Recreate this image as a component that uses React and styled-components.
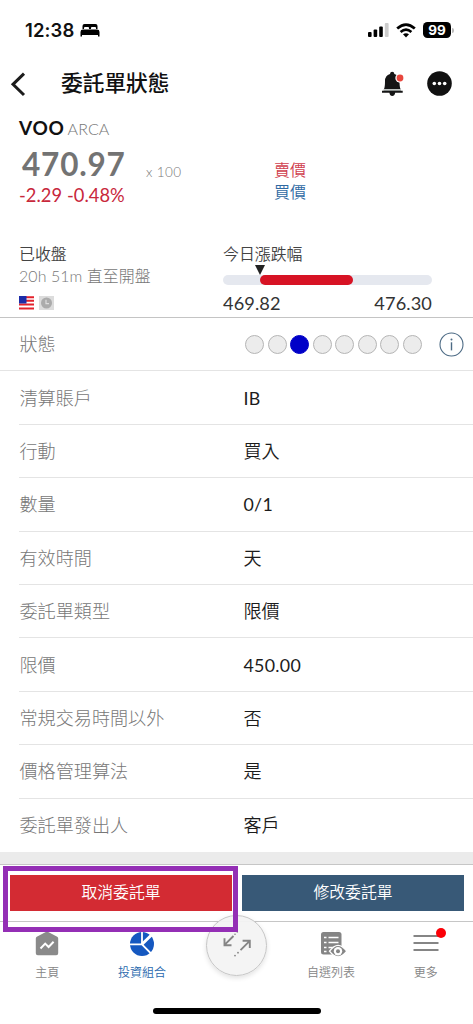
import React from "react";
import styled, { createGlobalStyle } from "styled-components";

const GlobalStyle = createGlobalStyle`
  * {
    box-sizing: border-box;
  }
  body {
    margin: 0;
    background: #fff;
    font-family: Lato, "Noto Sans CJK TC", sans-serif;
    color: #222;
  }
`;

const Screen = styled.div`
  position: relative;
  width: 473px;
  height: 1024px;
  overflow: hidden;
  display: flex;
  flex-direction: column;
  background: #fff;
`;

const StatusBar = styled.div`
  height: 60px;
  flex: none;
  display: flex;
  align-items: center;
  justify-content: space-between;
  padding: 0 19px 0 25px;
`;

const StatusGroup = styled.div`
  display: flex;
  align-items: center;
  gap: ${(props) => props.$gap}px;
`;

const Clock = styled.span`
  font-family: Inter, sans-serif;
  font-size: 18.5px;
  font-weight: 600;
  letter-spacing: 0.1px;
  color: #111;
`;

const Battery = styled.div`
  width: 28px;
  height: 15.5px;
  border-radius: 4.5px;
  background: #000;
  color: #fff;
  font-family: Inter, sans-serif;
  font-size: 13.5px;
  font-weight: 700;
  display: flex;
  align-items: center;
  justify-content: center;
`;

const BatteryTip = styled.div`
  width: 2px;
  height: 5px;
  margin-left: -6px;
  border-radius: 0 2px 2px 0;
  background: #bbb;
`;

const NavBar = styled.div`
  height: 47px;
  flex: none;
  display: flex;
  align-items: center;
  padding: 0 21px 0 9px;
`;

const Title = styled.h1`
  flex: 1;
  margin: 0 0 2px 34px;
  font-size: 21.7px;
  line-height: 30px;
  font-weight: 500;
  color: #111;
`;

const NavIcons = styled.div`
  display: flex;
  align-items: center;
  gap: 22px;
`;

const Quote = styled.section`
  height: 211px;
  flex: none;
  display: flex;
  flex-direction: column;
  padding: 9px 41px 0 19px;
  border-bottom: 1px solid #c4c4c4;
`;

const Symbol = styled.div`
  display: flex;
  align-items: baseline;
  gap: 3px;
  height: 24px;
  line-height: 24px;
`;

const Ticker = styled.span`
  font-size: 19px;
  font-weight: 700;
  letter-spacing: 0.7px;
  color: #111;
`;

const Exchange = styled.span`
  font-size: 16px;
  font-weight: 300;
  letter-spacing: 0.1px;
  color: #777;
`;

const PriceRow = styled.div`
  display: flex;
  height: 102px;
`;

const PriceColumn = styled.div`
  width: 127px;
`;

const Price = styled.div`
  padding: 6px 0 0 3px;
  font-size: 31.5px;
  line-height: 36px;
  font-weight: 700;
  letter-spacing: 0.8px;
  color: #737373;
`;

const Change = styled.div`
  margin-top: 1px;
  font-size: 18.3px;
  line-height: 24px;
  letter-spacing: 0.05px;
  white-space: nowrap;
  color: #c8283c;
`;

const Size = styled.div`
  width: 128px;
  padding-top: 22px;
  font-size: 13.5px;
  line-height: 20px;
  font-weight: 300;
  letter-spacing: 0.4px;
  color: #777;
`;

const BidAsk = styled.div`
  padding-top: 19px;
  font-size: 16px;
  line-height: 22px;
  font-weight: 350;
`;

const Ask = styled.div`
  color: #d0404e;
`;

const Bid = styled.div`
  color: #2f6aa3;
`;

const Market = styled.div`
  display: flex;
  justify-content: space-between;
`;

const Session = styled.div`
  font-size: 15.9px;
  line-height: 22px;
  font-weight: 350;
  padding-top: 1px;
  color: #444;
`;

const Countdown = styled.div`
  font-weight: 300;
  letter-spacing: 0.1px;
  color: #777;
`;

const Badges = styled.div`
  display: flex;
  gap: 5px;
  margin-top: 9px;
`;

const DayRange = styled.div`
  width: 209px;
  font-size: 15.9px;
  line-height: 22px;
  font-weight: 350;
  padding-top: 1px;
  color: #444;
`;

const Marker = styled.div`
  width: 0;
  height: 0;
  margin: 0 0 0 32px;
  border: 5px solid transparent;
  border-top: 10px solid #222;
  border-bottom: 0;
`;

const RangeTrack = styled.div`
  height: 10px;
  border-radius: 5px;
  padding: 0 79px 0 37px;
  background: #e5e8ef;
`;

const RangeFill = styled.div`
  height: 10px;
  border-radius: 5px;
  background: #d71324;
`;

const RangeLabels = styled.div`
  display: flex;
  justify-content: space-between;
  margin-top: 6px;
  font-size: 18.2px;
  line-height: 24px;
  font-weight: 400;
  letter-spacing: 0.1px;
  color: #333;
`;

const Details = styled.section`
  flex: none;
`;

const Row = styled.div`
  height: 53.4px;
  display: flex;
  align-items: center;
  margin-left: ${(props) => (props.$full ? 0 : 19)}px;
  padding-left: ${(props) => (props.$full ? 19.5 : 0.5)}px;
  border-bottom: 1px solid #e4e4e4;

  &:last-child {
    border-bottom: 0;
  }
`;

const Label = styled.div`
  width: 224px;
  flex: none;
  font-size: 18.1px;
  line-height: 26px;
  font-weight: 300;
  color: #777;
`;

const Value = styled.div`
  font-size: ${(props) => (props.$latin ? 17.8 : 18.1)}px;
  line-height: 26px;
  font-weight: ${(props) => (props.$latin ? 400 : 350)};
  letter-spacing: ${(props) => (props.$latin ? 0.3 : 0)}px;
  color: #1c1c1c;
`;

const Steps = styled.div`
  display: flex;
  gap: 3.5px;
  margin-left: 1.5px;
`;

const Step = styled.div`
  width: 19px;
  height: 19px;
  border-radius: 50%;
  border: 1px solid ${(props) => (props.$active ? "#0000c8" : "#b5b5b5")};
  background: ${(props) => (props.$active ? "#0000c8" : "#ececec")};
`;

const Info = styled.div`
  margin-left: 17px;
  display: flex;
`;

const Divider = styled.div`
  height: 13px;
  flex: none;
  background: #ebebeb;
  border-bottom: 1px solid #c6c6c6;
`;

const Actions = styled.div`
  height: 57px;
  flex: none;
  display: flex;
  gap: 10px;
  padding: 10px 9px 10px 10px;
  border-bottom: 1px solid #c6c6c6;
`;

const ActionButton = styled.button`
  flex: 1;
  border: 0;
  padding: 0 0 2px;
  font: inherit;
  font-size: 15.8px;
  font-weight: 350;
  color: #fff;
  background: ${(props) => (props.$danger ? "#d32b33" : "#385977")};
`;

const Highlight = styled.div`
  position: absolute;
  left: 3px;
  top: 866px;
  width: 235px;
  height: 66px;
  border: 5px solid #942fb5;
`;

const TabBar = styled.nav`
  flex: 1;
  display: grid;
  grid-template-columns: repeat(5, 1fr);
`;

const Tab = styled.div`
  display: flex;
  flex-direction: column;
  align-items: center;
  gap: 5px;
  padding-top: 8px;
  font-size: 12px;
  line-height: 20px;
  font-weight: 350;
  color: ${(props) => (props.$active ? "#2868ad" : "#858585")};
`;

const Swap = styled.div`
  position: absolute;
  left: 206px;
  top: 914.5px;
  width: 61px;
  height: 61px;
  display: flex;
  align-items: center;
  justify-content: center;
  border: 1px solid #c6c6c6;
  border-radius: 50%;
  background: rgba(243, 243, 243, 0.95);
  box-shadow: 0 2px 5px rgba(0, 0, 0, 0.12);
`;

const HomeIndicator = styled.div`
  position: absolute;
  left: 153px;
  top: 1008px;
  width: 168px;
  height: 6px;
  border-radius: 3px;
  background: #000;
`;

const BedIcon = () => (
  <svg width="20" height="15" viewBox="0 0 20 15">
    <path
      d="M2.5 6V3Q2.5 1 4.5 1H15.5Q17.5 1 17.5 3V6H16V4.8Q16 4 15 4H12Q11 4 11 4.8V6H9V4.8Q9 4 8 4H5Q4 4 4 4.8V6ZM0.5 13.5V9Q0.5 6.6 3 6.6H17Q19.5 6.6 19.5 9V13.5H18V12H2V13.5Z"
      fill="#000"
    />
  </svg>
);

const SignalIcon = () => (
  <svg width="21" height="14" viewBox="0 0 21 14">
    <rect x="0" y="9" width="3.6" height="5" rx="1" />
    <rect x="5.6" y="6.6" width="3.6" height="7.4" rx="1" />
    <rect x="11.2" y="3.6" width="3.6" height="10.4" rx="1" />
    <rect x="16.8" y="0" width="3.8" height="14" rx="1" fill="#ccc" />
  </svg>
);

const WifiIcon = () => (
  <svg width="20" height="15" viewBox="0 0 20 15" fill="none" stroke="#000">
    <path d="M1.2 5.6Q10-2.4 18.8 5.6" strokeWidth="2.7" />
    <path d="M4.6 9Q10 4.2 15.4 9" strokeWidth="2.6" />
    <path d="M7 11.3Q10 9 13 11.3L10 14.4Z" fill="#000" stroke="none" />
  </svg>
);

const BackIcon = () => (
  <svg width="18" height="26" viewBox="0 0 18 26">
    <path
      d="M15 2.6L4 13.3L15 24"
      fill="none"
      stroke="#1c1c1c"
      strokeWidth="3"
    />
  </svg>
);

const BellIcon = () => (
  <svg width="24" height="26" viewBox="0 0 24 26">
    <path
      d="M3 18Q4 16 4 10Q4 4.5 9 3Q9.2 0.8 11.2 0.8Q13.2 0.8 13.4 3Q18.5 4.5 18.5 10Q18.5 16 19.5 18Z"
      fill="#151515"
    />
    <path d="M2.5 18.2H20V20H2.5Z" fill="#aeb4b2" />
    <path
      d="M1 19.8H21.7V21.8H14.2Q13.5 25 11.2 25Q9 25 8.4 21.8H1Z"
      fill="#151515"
    />
    <circle cx="19" cy="7" r="4.7" fill="#fff" />
    <circle cx="19" cy="7" r="3.4" fill="#e8473e" />
  </svg>
);

const MoreIcon = () => (
  <svg width="25" height="25" viewBox="0 0 25 25">
    <circle cx="12.5" cy="12.5" r="12.3" fill="#111" />
    <circle cx="7.3" cy="12.5" r="1.8" fill="#fff" />
    <circle cx="12.5" cy="12.5" r="1.8" fill="#fff" />
    <circle cx="17.7" cy="12.5" r="1.8" fill="#fff" />
  </svg>
);

const FlagIcon = () => (
  <svg width="15" height="14" viewBox="0 0 15 14">
    <rect width="15" height="14" fill="#fff" />
    <path
      d="M0 1.2H15M0 4.7H15M0 8.6H15M0 12.4H15"
      stroke="#e3222c"
      strokeWidth="2"
    />
    <rect width="7.5" height="7.5" fill="#1c2ca8" />
  </svg>
);

const ClockIcon = () => (
  <svg width="15" height="14" viewBox="0 0 15 14">
    <rect width="15" height="14" fill="#dcdcdc" />
    <circle cx="7.5" cy="7" r="5.5" fill="#ababab" />
    <path d="M7 3.8V7.6H10" fill="none" stroke="#dcdcdc" strokeWidth="1.2" />
  </svg>
);

const InfoIcon = () => (
  <svg width="25" height="25" viewBox="0 0 25 25">
    <circle
      cx="12.5"
      cy="12.5"
      r="11.5"
      fill="none"
      stroke="#4d6b85"
      strokeWidth="1.1"
    />
    <circle cx="12.5" cy="7.6" r="1" fill="#4d6b85" />
    <path d="M12.5 10.3V18.4" stroke="#4d6b85" strokeWidth="1.4" />
  </svg>
);

const HomeIcon = () => (
  <svg width="26" height="28" viewBox="0 0 26 28">
    <path
      d="M1.8 8.6Q1.8 7.4 2.8 6.8L11.8 2Q13 1.3 14.2 2L23.2 6.8Q24.2 7.4 24.2 8.6V23.3Q24.2 25.3 22.2 25.3H3.8Q1.8 25.3 1.8 23.3Z"
      fill="#8a8a8a"
    />
    <path
      d="M6.5 18.5L11.2 13.6L14.6 17L19.6 11.8"
      fill="none"
      stroke="#fff"
      strokeWidth="2"
    />
  </svg>
);

const PortfolioIcon = () => (
  <svg width="26" height="28" viewBox="0 0 26 28">
    <circle cx="13" cy="14" r="12" fill="#1558c0" />
    <path d="M0 14.3H13L22.5 24M13 14.3V0" fill="none" stroke="#fff" strokeWidth="1.8" />
    <path d="M13 14.3L23.5 4" stroke="#fff" strokeWidth="3" />
  </svg>
);

const WatchlistIcon = () => (
  <svg width="26" height="28" viewBox="0 0 26 28" overflow="visible">
    <rect x="3" y="2" width="20.5" height="22.5" rx="2.5" fill="#858585" />
    <path
      d="M6 7.5H8.5M10.5 7.5H20.5M6 12.5H8.5M10.5 12.5H20.5M6 17.5H8.5M10.5 17.5H15M6 21.5H8.5"
      stroke="#fff"
      strokeWidth="1.6"
    />
    <path
      d="M11.5 21.2Q20 9.5 28.8 21.2Q20 32.5 11.5 21.2Z"
      fill="#858585"
      stroke="#fff"
      strokeWidth="1.4"
    />
    <circle cx="20" cy="21.2" r="4.2" fill="#fff" />
    <circle cx="20" cy="21.2" r="2" fill="#858585" />
  </svg>
);

const MenuIcon = () => (
  <svg width="26" height="28" viewBox="0 0 26 28" overflow="visible">
    <path
      d="M0.5 6H25.5M0.5 13H25.5M0.5 20H25.5"
      stroke="#858585"
      strokeWidth="1.8"
    />
    <circle cx="28" cy="3" r="5" fill="#fb0007" />
  </svg>
);

const SwapIcon = () => (
  <svg width="30" height="30" viewBox="0 0 30 30" fill="none" stroke="#858585">
    <path d="M11.5 6L2.8 14.7M2.5 8.2V15.2H9.5" strokeWidth="1.9" />
    <path d="M18.5 20.2L27.5 11.2M20.6 10.7H27.8V17.9" strokeWidth="1.9" />
    <g fill="#858585" stroke="none">
      <circle cx="13" cy="4.2" r="0.8" />
      <circle cx="15.3" cy="1.9" r="0.8" />
      <circle cx="13" cy="25.6" r="0.9" />
      <circle cx="16" cy="22.7" r="0.9" />
    </g>
  </svg>
);

const details = [
  { label: "清算賬戶", value: "IB", latin: true },
  { label: "行動", value: "買入" },
  { label: "數量", value: "0/1", latin: true },
  { label: "有效時間", value: "天" },
  { label: "委託單類型", value: "限價" },
  { label: "限價", value: "450.00", latin: true },
  { label: "常規交易時間以外", value: "否" },
  { label: "價格管理算法", value: "是" },
  { label: "委託單發出人", value: "客戶" },
];

const steps = [0, 1, 2, 3, 4, 5, 6, 7];

function Header() {
  return (
    <>
      <StatusBar>
        <StatusGroup $gap={6}>
          <Clock>12:38</Clock>
          <BedIcon />
        </StatusGroup>
        <StatusGroup $gap={7}>
          <SignalIcon />
          <WifiIcon />
          <Battery>99</Battery>
          <BatteryTip />
        </StatusGroup>
      </StatusBar>
      <NavBar>
        <BackIcon />
        <Title>委託單狀態</Title>
        <NavIcons>
          <BellIcon />
          <MoreIcon />
        </NavIcons>
      </NavBar>
    </>
  );
}

function QuotePanel() {
  return (
    <Quote>
      <Symbol>
        <Ticker>VOO</Ticker>
        <Exchange>ARCA</Exchange>
      </Symbol>
      <PriceRow>
        <PriceColumn>
          <Price>470.97</Price>
          <Change>-2.29 -0.48%</Change>
        </PriceColumn>
        <Size>x 100</Size>
        <BidAsk>
          <Ask>賣價</Ask>
          <Bid>買價</Bid>
        </BidAsk>
      </PriceRow>
      <Market>
        <Session>
          已收盤
          <Countdown>20h 51m 直至開盤</Countdown>
          <Badges>
            <FlagIcon />
            <ClockIcon />
          </Badges>
        </Session>
        <DayRange>
          今日漲跌幅
          <Marker />
          <RangeTrack>
            <RangeFill />
          </RangeTrack>
          <RangeLabels>
            <span>469.82</span>
            <span>476.30</span>
          </RangeLabels>
        </DayRange>
      </Market>
    </Quote>
  );
}

function OrderDetails() {
  return (
    <Details>
      <Row $full>
        <Label>狀態</Label>
        <Steps>
          {steps.map((step) => (
            <Step key={step} $active={step === 2} />
          ))}
        </Steps>
        <Info>
          <InfoIcon />
        </Info>
      </Row>
      {details.map((item) => (
        <Row key={item.label}>
          <Label>{item.label}</Label>
          <Value $latin={item.latin}>{item.value}</Value>
        </Row>
      ))}
    </Details>
  );
}

function App() {
  return (
    <>
      <GlobalStyle />
      <Screen>
        <Header />
        <QuotePanel />
        <OrderDetails />
        <Divider />
        <Actions>
          <ActionButton $danger>取消委託單</ActionButton>
          <ActionButton>修改委託單</ActionButton>
        </Actions>
        <TabBar>
          <Tab>
            <HomeIcon />
            主頁
          </Tab>
          <Tab $active>
            <PortfolioIcon />
            投資組合
          </Tab>
          <div />
          <Tab>
            <WatchlistIcon />
            自選列表
          </Tab>
          <Tab>
            <MenuIcon />
            更多
          </Tab>
        </TabBar>
        <Swap>
          <SwapIcon />
        </Swap>
        <Highlight />
        <HomeIndicator />
      </Screen>
    </>
  );
}

export default App;
